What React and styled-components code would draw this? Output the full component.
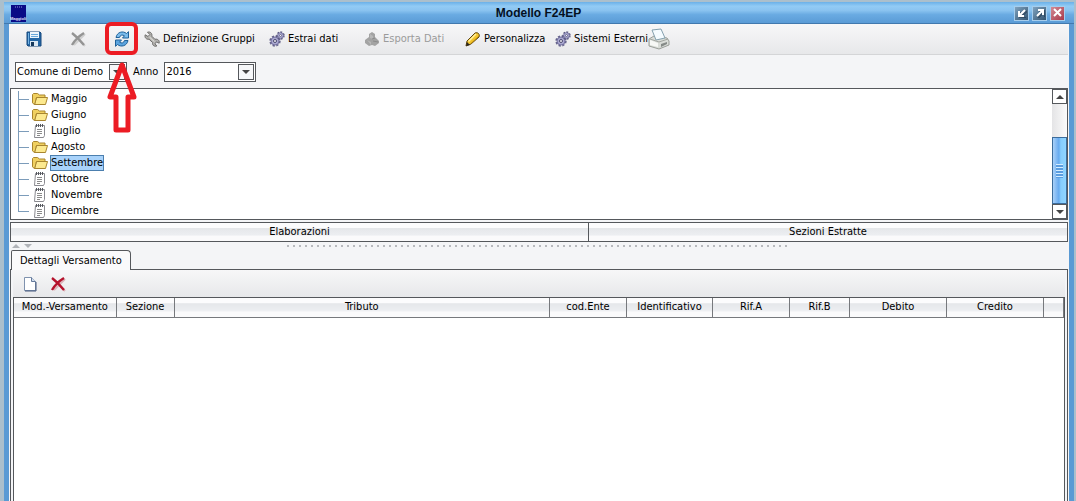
import React, { useState } from "react";
import styled, { createGlobalStyle, css } from "styled-components";

const months = [
  { name: "Maggio", folder: true },
  { name: "Giugno", folder: true },
  { name: "Luglio", folder: false },
  { name: "Agosto", folder: true },
  { name: "Settembre", folder: true },
  { name: "Ottobre", folder: false },
  { name: "Novembre", folder: false },
  { name: "Dicembre", folder: false },
];

const columns = [
  { title: "Mod.-Versamento", width: 102 },
  { title: "Sezione", width: 58 },
  { title: "Tributo" },
  { title: "cod.Ente", width: 77 },
  { title: "Identificativo", width: 86 },
  { title: "Rif.A", width: 77 },
  { title: "Rif.B", width: 60 },
  { title: "Debito", width: 97 },
  { title: "Credito", width: 97 },
  { title: "", width: 20 },
];

const App = () => {
  const [selected, setSelected] = useState("Settembre");

  return (
    <>
      <GlobalStyle />
      <Window>
        <TitleBar>
          <Logo />
          <Title>Modello F24EP</Title>
          <WindowButton aria-label="Riduci">
            <ArrowIcon />
          </WindowButton>
          <WindowButton aria-label="Ingrandisci">
            <ArrowIcon up />
          </WindowButton>
          <WindowButton aria-label="Chiudi" $close>
            <CloseIcon />
          </WindowButton>
        </TitleBar>
        <Body>
          <Toolbar>
            <ToolButton aria-label="Salva" $width={44}>
              <SaveIcon />
            </ToolButton>
            <ToolButton aria-label="Annulla" $width={44}>
              <CrossIcon color="#949494" shade="#cfcfcf" />
            </ToolButton>
            <ToolButton aria-label="Aggiorna" $width={30}>
              <RefreshIcon />
              <Highlight>
                <PointerArrow />
              </Highlight>
            </ToolButton>
            <ToolButton $width={125}>
              <WrenchIcon />
              Definizione Gruppi
            </ToolButton>
            <ToolButton $width={95}>
              <GearsIcon />
              Estrai dati
            </ToolButton>
            <ToolButton $width={101} disabled>
              <ExportIcon />
              Esporta Dati
            </ToolButton>
            <ToolButton $width={90}>
              <PencilIcon />
              Personalizza
            </ToolButton>
            <ToolButton $width={93}>
              <GearsIcon />
              Sistemi Esterni
            </ToolButton>
            <ToolButton aria-label="Stampa" $width={22}>
              <PrinterIcon />
            </ToolButton>
          </Toolbar>
          <Filters>
            <SelectBox $width={112}>
              <select aria-label="Ente" defaultValue="Comune di Demo">
                <option>Comune di Demo</option>
              </select>
              <DropMark />
            </SelectBox>
            <label htmlFor="anno">Anno</label>
            <SelectBox $width={92}>
              <select id="anno" defaultValue="2016">
                <option>2016</option>
              </select>
              <DropMark />
            </SelectBox>
          </Filters>
          <TreePanel>
            <Tree>
              {months.map((month) => (
                <TreeRow key={month.name}>
                  <TreeIcon>{month.folder ? <FolderIcon /> : <NoteIcon />}</TreeIcon>
                  <TreeLabel
                    $selected={month.name === selected}
                    onClick={() => setSelected(month.name)}
                  >
                    {month.name}
                  </TreeLabel>
                </TreeRow>
              ))}
            </Tree>
            <ScrollBar>
              <ScrollButton aria-label="Su">
                <Triangle up />
              </ScrollButton>
              <Thumb>
                <Grip />
              </Thumb>
              <ScrollButton aria-label="Giù">
                <Triangle />
              </ScrollButton>
            </ScrollBar>
          </TreePanel>
          <Sections>
            <SectionButton>Elaborazioni</SectionButton>
            <SectionButton>Sezioni Estratte</SectionButton>
          </Sections>
          <Splitter>
            <Triangle up color="#b0b3b8" />
            <Triangle color="#b0b3b8" />
            <Dots />
          </Splitter>
          <Tabs>
            <Tab>Dettagli Versamento</Tab>
          </Tabs>
          <Details>
            <DetailTools>
              <ToolButton aria-label="Nuovo" $width={16}>
                <PageIcon />
              </ToolButton>
              <ToolButton aria-label="Elimina" $width={16}>
                <CrossIcon color="#b5122c" shade="#dcb4ba" />
              </ToolButton>
            </DetailTools>
            <TableArea>
              <Table>
                <thead>
                  <tr>
                    {columns.map((column) => (
                      <HeadCell key={column.title} $width={column.width}>
                        {column.title}
                      </HeadCell>
                    ))}
                  </tr>
                </thead>
              </Table>
            </TableArea>
          </Details>
        </Body>
      </Window>
    </>
  );
};

const Logo = () => (
  <svg width="17" height="17" viewBox="0 0 17 17">
    <rect x="1" width="15" height="17" fill="#0a0a86" />
    <path d="M5 2h7" stroke="#8f93d8" strokeDasharray="1 1" />
    <text
      x="8"
      y="15"
      textAnchor="middle"
      fontSize="4"
      fontWeight="bold"
      fontFamily="Liberation Sans"
      fill="#e4e6ff"
    >
      Maggioli
    </text>
  </svg>
);

const ArrowIcon = ({ up }) => (
  <svg width="10" height="10" viewBox="0 0 10 10" fill="none" strokeWidth="2">
    <path
      d={up ? "M3 2h6v6M8 3L2 9" : "M2 3v6h6M3 8l6-6"}
      stroke="#24394c"
      strokeOpacity="0.6"
      transform="translate(1 1)"
    />
    <path d={up ? "M3 2h5v5M8 2L2 8" : "M2 3v5h5M2 8l6-6"} stroke="#fff" />
  </svg>
);

const CloseIcon = () => (
  <svg width="10" height="10" viewBox="0 0 10 10" stroke="#fff" strokeWidth="2">
    <path d="M1 1l7 7M8 1L1 8" />
  </svg>
);

const SaveIcon = () => (
  <svg width="16" height="16" viewBox="0 0 16 16">
    <path d="M1 1h13l1 1v13H2l-1-1z" fill="#2467a5" stroke="#17497c" />
    <rect x="4" y="1" width="9" height="6" fill="#eef6fc" />
    <path d="M5 3.5h7M5 5.5h7" stroke="#69a9dc" />
    <rect x="4" y="10" width="8" height="5" fill="#dbe8f3" />
    <rect x="5" y="11" width="3" height="4" fill="#17395c" />
    <path d="M2.5 2v11" stroke="#75b2e2" />
  </svg>
);

const CrossIcon = ({ color, shade }) => (
  <svg width="16" height="16" viewBox="0 0 16 16" fill="none">
    <path d="M3 3l12 12M15 3L4 14" stroke={shade} strokeWidth="2" />
    <path d="M2 2c4 3 8 7 12 12M14 2C9 5 5 9 2 14" stroke={color} strokeWidth="2.4" />
  </svg>
);

const RefreshIcon = () => (
  <svg width="16" height="16" viewBox="0 0 16 16" strokeLinejoin="round">
    <path
      d="M2 6.500C3 1 9-.5 12.500 2.500L14.500.7V7H8.500l2-2.200C8.500 3.400 6 4 5.500 6.500z"
      fill="#7cbcec"
      stroke="#1e6098"
    />
    <path
      d="M14 9.500c-1 5.500-7 7-10.500 4L1.500 15.300V9h6l-2 2.200c2 1.400 4.500.8 5-1.700z"
      fill="#5ba4df"
      stroke="#1e6098"
    />
  </svg>
);

const WrenchIcon = () => (
  <svg width="16" height="16" viewBox="0 0 16 16" strokeLinejoin="round">
    <path
      d="M3.500 1.200L5.800 3.500 4 5.500 1.200 3.800C.3 6.500 2.300 8.700 5 8.200L8.600 11.500C8 14 10.300 16 12.800 15L11 12.800l1.500-1.900 2.700 1.300c.6-2.700-1.700-4.700-4.300-3.900L7.800 5.200C8.500 2.300 6.200.3 3.500 1.200z"
      fill="#b2b1ae"
      stroke="#6f6e6c"
    />
    <path d="M5.500 6l5 4.800" stroke="#e9e8e5" fill="none" />
  </svg>
);

const GearsIcon = () => (
  <svg width="16" height="16" viewBox="0 0 16 16" fill="none">
    <circle cx="6" cy="10" r="4.700" stroke="#66648c" strokeWidth="2" strokeDasharray="2.200 1.500" />
    <circle cx="6" cy="10" r="4" fill="#a9a7d0" stroke="#7572a0" />
    <circle cx="6" cy="10" r="1.500" fill="#f4f4f8" stroke="#4d4b70" />
    <circle cx="11.500" cy="4.500" r="3.400" stroke="#5a587e" strokeWidth="1.600" strokeDasharray="1.800 1.300" />
    <circle cx="11.500" cy="4.500" r="2.800" fill="#b6b4da" stroke="#7572a0" />
    <circle cx="11.500" cy="4.500" r="1" fill="#f4f4f8" stroke="#4d4b70" strokeWidth=".7" />
  </svg>
);

const ExportIcon = () => (
  <svg width="16" height="16" viewBox="0 0 16 16">
    <path d="M8 1l3 2v3l4 4v2l-4 3-3-1-3 1-4-3V9l4-3V3z" fill="#a3a3a3" />
    <path d="M6 3l3 2v3l-3-1zM3 9l4 2v3" fill="#b8b8b8" />
    <path d="M9 10l5 1M8 8l3-1" stroke="#8b8b8b" />
  </svg>
);

const PencilIcon = () => (
  <svg width="16" height="16" viewBox="0 0 16 16" strokeLinejoin="round">
    <path d="M2 10l8-8c3-1 5 1 4 4l-8 7-5 2z" fill="#f4c52c" stroke="#5f4510" />
    <path d="M3.500 10.500l7.500-7.500" stroke="#fff0a0" strokeWidth="1.500" />
    <path d="M6 12.500l7.500-7" stroke="#b3830c" />
    <path d="M1 15l1-4 3 3z" fill="#2b2720" />
  </svg>
);

const PrinterIcon = () => (
  <svg width="22" height="22" viewBox="0 0 22 22" strokeLinejoin="round">
    <path d="M1 11l5-3 13 2 2 3v4l-10 4-10-3z" fill="#d9dcd8" stroke="#9a9e99" />
    <path d="M4 2l9-1 4 9-9 2z" fill="#f5fbff" stroke="#84a0ae" />
    <path d="M2 11l9 3 9-3" stroke="#a2a6a1" fill="none" />
    <path d="M2 12l8 3v4l-8-2z" fill="#f7f8f6" />
    <path d="M13 16l6-2v2l-6 3z" fill="#858a87" />
  </svg>
);

const FolderIcon = () => (
  <svg width="16" height="14" viewBox="0 0 16 14" strokeLinejoin="round">
    <path d="M.5 11V2.500l1-1h4l2 1.500h5.500v2" fill="#f0d060" stroke="#a8852f" />
    <path d="M2.500 12.500l2-7h11l-2 7z" fill="#fce98f" stroke="#a8852f" />
    <path d="M.5 11l2 1.500 2-7" fill="#f6da6e" stroke="#a8852f" />
  </svg>
);

const NoteIcon = () => (
  <svg width="16" height="14" viewBox="0 0 16 14">
    <path d="M3.500 1.500h9v10l-1 2h-9z" fill="#fff" stroke="#8a8a90" />
    <path d="M4.500 0v3M6.500 0v3M8.500 0v3M10.500 0v3" stroke="#55585e" />
    <path d="M5 5.500h5M5 7.500h5M5 9.500h5M5 11.500h3" stroke="#8a8a8a" />
  </svg>
);

const PageIcon = () => (
  <svg width="16" height="16" viewBox="0 0 16 16">
    <path d="M2.500 1.500h7l4 4v9h-11z" fill="#fff" stroke="#7f92ae" />
    <path d="M9.500 1.500v4h4" fill="#d3deed" stroke="#64799a" />
    <path d="M14 6v9H3" stroke="#46597c" fill="none" />
  </svg>
);

const Triangle = ({ up, color = "#444" }) => (
  <svg width="8" height="4" viewBox="0 0 8 4">
    <path d={up ? "M0 4l4-4 4 4z" : "M0 0h8L4 4z"} fill={color} />
  </svg>
);

const DropMark = () => (
  <DropButton>
    <Triangle />
  </DropButton>
);

const PointerArrow = () => (
  <svg width="32" height="74" viewBox="0 0 32 74">
    <path
      d="M16 5L4 37h6v33h12V37h6z"
      fill="none"
      stroke="#ec1c24"
      strokeWidth="5"
      strokeLinejoin="round"
    />
  </svg>
);

export default App;

const GlobalStyle = createGlobalStyle`
  * {
    box-sizing: border-box;
  }
  body {
    margin: 0;
    background: #abbfcc;
    color: #000;
    font: 11px/16px "DejaVu Sans Condensed", "Noto Sans", sans-serif;
  }
  button, select {
    font: inherit;
    color: inherit;
  }
`;

const line = "#55585c";

const Window = styled.div`
  display: flex;
  flex-direction: column;
  min-height: 100vh;
  padding: 2px 2px 0 4px;
`;

const TitleBar = styled.header`
  display: flex;
  align-items: center;
  gap: 3px;
  height: 22px;
  padding: 1px 9px 0 6px;
  background: linear-gradient(#6bb0e8, #92cbf5 20%, #8ac3f0 40%, #6aabe2 60%, #5a9bd6);
  border-bottom: 1px solid #4179ae;
`;

const Title = styled.h1`
  flex: 1;
  margin: 0;
  padding-left: 36px;
  text-align: center;
  font: bold 12px/16px "Liberation Sans", Arial, sans-serif;
  color: #04101f;
`;

const WindowButton = styled.button`
  display: flex;
  align-items: center;
  justify-content: center;
  width: 15px;
  height: 15px;
  padding: 0;
  border: 1px solid #a6cdec;
  background: linear-gradient(135deg, #7fa3c0, #33536f);
  ${(props) =>
    props.$close &&
    css`
      background: linear-gradient(135deg, #d28a94, #a8394a);
    `}
`;

const Body = styled.main`
  flex: 1;
  display: flex;
  flex-direction: column;
  padding: 0 1px;
  background: #f4f5f7;
  border: solid #5a9ad4;
  border-width: 0 5px;
`;

const Toolbar = styled.div`
  display: flex;
  align-items: center;
  height: 31px;
  padding-left: 16px;
  background: linear-gradient(#f7f7f8, #e7e8ea);
  border-bottom: 1px solid #d4d5d7;
`;

const ToolButton = styled.button`
  position: relative;
  display: flex;
  align-items: center;
  gap: 3px;
  flex: none;
  width: ${(props) => props.$width}px;
  padding: 0;
  border: 0;
  background: none;
  white-space: nowrap;
  &:disabled {
    color: #9b9b9b;
  }
  svg {
    flex: none;
  }
`;

const Highlight = styled.span`
  position: absolute;
  left: -9px;
  top: -9px;
  width: 33px;
  height: 33px;
  border: 4px solid #ec1c24;
  border-radius: 6px;
  pointer-events: none;
  z-index: 1;
  svg {
    position: absolute;
    left: -3px;
    top: 34px;
  }
`;

const Filters = styled.div`
  display: flex;
  align-items: center;
  gap: 6px;
  height: 33px;
  padding-left: 5px;
`;

const SelectBox = styled.div`
  display: flex;
  position: relative;
  width: ${(props) => props.$width}px;
  height: 20px;
  border: 1px solid ${line};
  background: #fff;
  select {
    flex: 1;
    min-width: 0;
    appearance: none;
    padding: 0 18px 0 1px;
    border: 0;
    background: none;
  }
`;

const DropButton = styled.span`
  position: absolute;
  right: 1px;
  top: 1px;
  display: flex;
  align-items: center;
  justify-content: center;
  width: 16px;
  height: 16px;
  border: 1px solid ${line};
  background: #f6f7f9;
  pointer-events: none;
`;

const TreePanel = styled.div`
  display: flex;
  height: 132px;
  border: 1px solid ${line};
  background: #fff;
`;

const Tree = styled.ul`
  flex: 1;
  margin: 0;
  padding: 2px 0 0 7px;
  list-style: none;
`;

const TreeRow = styled.li`
  display: flex;
  align-items: center;
  height: 16px;
  &::before {
    content: "";
    width: 10px;
    height: 16px;
    margin-right: 3px;
    border-left: 1px solid #7c9cba;
    background: linear-gradient(#7c9cba, #7c9cba) 0 8px / 10px 1px no-repeat;
  }
  &:last-child::before {
    height: 9px;
    align-self: flex-start;
  }
`;

const TreeIcon = styled.span`
  display: flex;
  width: 18px;
`;

const TreeLabel = styled.button`
  height: 16px;
  padding: 0;
  line-height: 14px;
  border: 1px solid transparent;
  background: none;
  ${(props) =>
    props.$selected &&
    css`
      border-color: #4c7fae;
      background: #a9d3fb;
    `}
`;

const ScrollBar = styled.div`
  display: flex;
  flex-direction: column;
  width: 15px;
  background: linear-gradient(90deg, #e4e4e6, #fbfbfb);
`;

const ScrollButton = styled.button`
  display: flex;
  align-items: center;
  justify-content: center;
  height: 15px;
  padding: 0;
  border: 1px solid ${line};
  background: #fff;
`;

const Thumb = styled.div`
  display: flex;
  align-items: center;
  justify-content: center;
  height: 67px;
  margin-top: auto;
  border: 1px solid #3b6c9c;
  background: linear-gradient(90deg, #a9d0f8, #66aaf0 45%, #86cdfc 60%, #8fd4ff);
`;

const Grip = styled.div`
  width: 7px;
  height: 14px;
  background: repeating-linear-gradient(#d5edff 0 1px, #5b9de0 1px 3px);
`;

const Sections = styled.div`
  display: grid;
  grid-template-columns: 1fr 479px;
  height: 20px;
  margin-top: 2px;
  border: 1px solid ${line};
`;

const chrome = "linear-gradient(#fcfcfd 25%, #e5e7ea 30%, #eceef1 65%, #fafafb 75%)";

const SectionButton = styled.button`
  padding: 0;
  border: 0;
  background: ${chrome};
  & + & {
    border-left: 1px solid ${line};
  }
`;

const Splitter = styled.div`
  display: grid;
  grid-template-columns: 8px 8px 1fr 24px;
  align-items: center;
  gap: 4px;
  height: 8px;
  padding-left: 2px;
`;

const Dots = styled.div`
  width: 50%;
  height: 2px;
  justify-self: center;
  background: repeating-linear-gradient(90deg, #b8babe 0 2px, transparent 2px 6px);
`;

const Tabs = styled.div`
  display: flex;
  height: 20px;
  padding-left: 1px;
`;

const Tab = styled.button`
  position: relative;
  z-index: 1;
  height: 20px;
  padding: 0 8px;
  border: 1px solid ${line};
  border-bottom: 0;
  border-radius: 2px 4px 0 0;
  background: #fafafb;
`;

const Details = styled.section`
  flex: 1;
  display: flex;
  flex-direction: column;
  margin-top: -1px;
  padding: 0 2px;
  border: 1px solid ${line};
  border-bottom: 0;
`;

const DetailTools = styled.div`
  display: flex;
  align-items: center;
  gap: 12px;
  height: 27px;
  padding-left: 9px;
  background: linear-gradient(#f7f7f8, #e7e8ea);
`;

const TableArea = styled.div`
  flex: 1;
  border: 1px solid ${line};
  border-bottom: 0;
  background: #fff;
`;

const Table = styled.table`
  width: 100%;
  table-layout: fixed;
  border-collapse: collapse;
`;

const HeadCell = styled.th`
  width: ${(props) => (props.$width ? `${props.$width}px` : "auto")};
  height: 19px;
  padding: 0;
  font-weight: normal;
  background: ${chrome};
  border-right: 1px solid #77797d;
  border-bottom: 1px solid #77797d;
`;
